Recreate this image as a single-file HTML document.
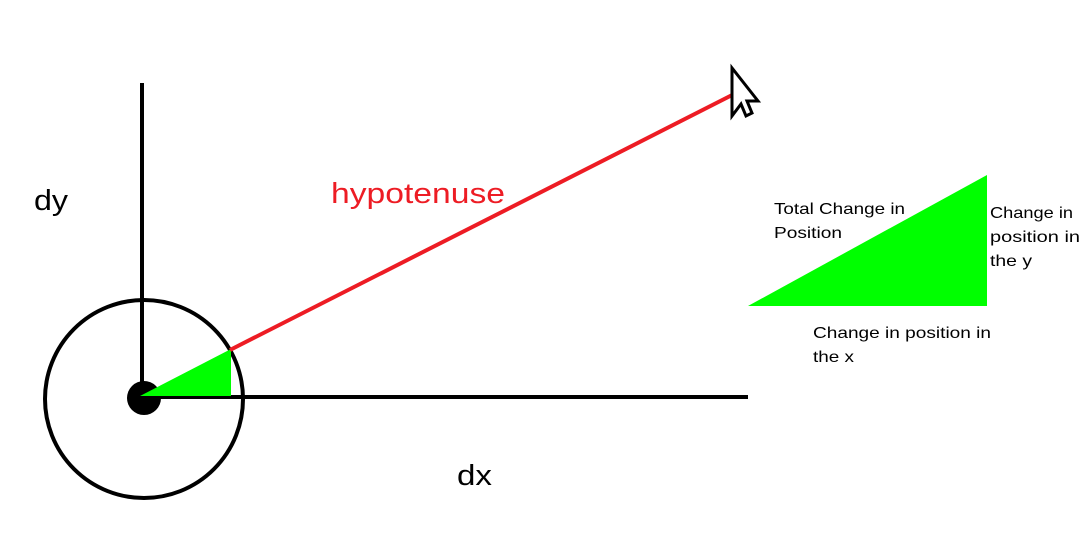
<!DOCTYPE html>
<html><head><style>
body{margin:0;background:#fff;width:1090px;height:535px;overflow:hidden}
svg{display:block}
text{font-family:"Liberation Sans",sans-serif}
</style></head><body>
<svg width="1090" height="535" viewBox="0 0 1090 535">
<rect width="1090" height="535" fill="#fff"/>
<circle cx="144" cy="399" r="99" fill="none" stroke="#000" stroke-width="4"/>
<line x1="142" y1="83" x2="142" y2="397" stroke="#000" stroke-width="4"/>
<line x1="142" y1="397" x2="748" y2="397" stroke="#000" stroke-width="4"/>
<circle cx="144" cy="398" r="17" fill="#000"/>
<polygon points="140,396 231,349 231,396" fill="#00ff00"/>
<line x1="230" y1="350" x2="742" y2="90" stroke="#ed1c24" stroke-width="4"/>
<path d="M732,68 L732,116 L741,104 L746,116 L752,113 L747,101 L758,101 Z" fill="#fff" stroke="#000" stroke-width="3" stroke-linejoin="miter"/>
<polygon points="748,306 987,175 987,306" fill="#00ff00"/>
<text x="34" y="210" font-size="29" textLength="34" lengthAdjust="spacingAndGlyphs">dy</text>
<text x="457" y="485" font-size="29" textLength="35" lengthAdjust="spacingAndGlyphs">dx</text>
<text x="331" y="203" font-size="29" fill="#ed1c24" textLength="174" lengthAdjust="spacingAndGlyphs">hypotenuse</text>
<text x="774" y="214" font-size="16" textLength="131" lengthAdjust="spacingAndGlyphs">Total Change in</text>
<text x="774" y="238" font-size="16" textLength="68" lengthAdjust="spacingAndGlyphs">Position</text>
<text x="990" y="218" font-size="16" textLength="83" lengthAdjust="spacingAndGlyphs">Change in</text>
<text x="990" y="242" font-size="16" textLength="90" lengthAdjust="spacingAndGlyphs">position in</text>
<text x="990" y="266" font-size="16" textLength="42" lengthAdjust="spacingAndGlyphs">the y</text>
<text x="813" y="338" font-size="16" textLength="178" lengthAdjust="spacingAndGlyphs">Change in position in</text>
<text x="813" y="362" font-size="16" textLength="41" lengthAdjust="spacingAndGlyphs">the x</text>
</svg>
</body></html>
